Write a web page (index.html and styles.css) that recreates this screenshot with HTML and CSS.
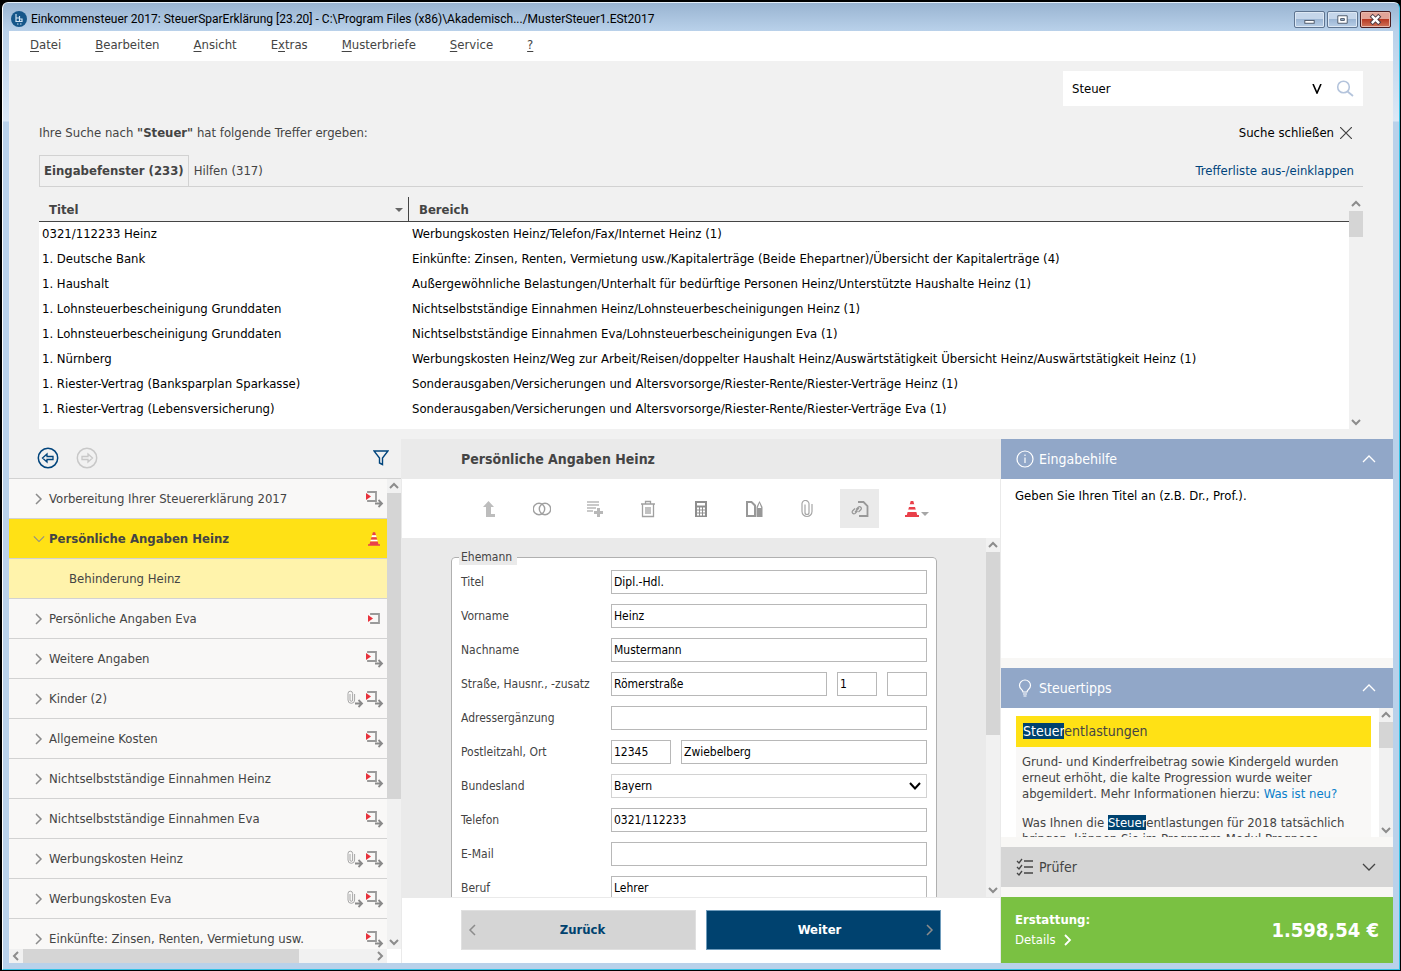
FILE: index.html
```
<!DOCTYPE html>
<html lang="de">
<head>
    <meta charset="UTF-8">
    <meta name="viewport" content="width=device-width, initial-scale=1.0">
    <title>Einkommensteuer 2017: SteuerSparErklärung</title>
    <link rel="stylesheet" href="styles.css">
</head>
<body>
    <svg class="sprite" aria-hidden="true">
        <symbol id="chev-right" viewBox="0 0 8 12"><path d="M1 1l5 5-5 5" fill="none" stroke="currentColor" stroke-width="1.5"/></symbol>
        <symbol id="chev-left" viewBox="0 0 8 12"><path d="M7 1L2 6l5 5" fill="none" stroke="currentColor" stroke-width="1.5"/></symbol>
        <symbol id="chev-down" viewBox="0 0 14 8"><path d="M1 1l6 6 6-6" fill="none" stroke="currentColor" stroke-width="1.3"/></symbol>
        <symbol id="chev-up" viewBox="0 0 14 8"><path d="M1 7l6-6 6 6" fill="none" stroke="currentColor" stroke-width="1.3"/></symbol>
        <symbol id="sb-up" viewBox="0 0 14 14"><path d="M3 9l4-4 4 4" fill="none" stroke="#8c8c8c" stroke-width="2"/></symbol>
        <symbol id="sb-down" viewBox="0 0 14 14"><path d="M3 5l4 4 4-4" fill="none" stroke="#8c8c8c" stroke-width="2"/></symbol>
        <symbol id="sb-left" viewBox="0 0 14 14"><path d="M9 3L5 7l4 4" fill="none" stroke="#8c8c8c" stroke-width="2"/></symbol>
        <symbol id="sb-right" viewBox="0 0 14 14"><path d="M5 3l4 4-4 4" fill="none" stroke="#8c8c8c" stroke-width="2"/></symbol>
        <symbol id="entry" viewBox="0 0 18 18">
            <path d="M5 5V4h8v9H5v-1" fill="none" stroke="#9a9a9a" stroke-width="1.8"/>
            <path d="M2 5l5 3.500-5 3.500z" fill="#e8323c"/>
        </symbol>
        <symbol id="entry-sub" viewBox="0 0 18 18">
            <path d="M2 3V2h8v9H2v-1" fill="none" stroke="#9a9a9a" stroke-width="1.8"/>
            <path d="M0 3l5 3.500L0 10z" fill="#e8323c"/>
            <path d="M9 13.500h7M12.500 10l3.500 3.500-3.500 3.500" fill="none" stroke="#8a8a8a" stroke-width="1.8"/>
        </symbol>
        <symbol id="clip-sub" viewBox="0 0 18 18">
            <path d="M4 4v6a1.300 1.300 0 0 0 2.600 0V3.500a2.300 2.300 0 0 0-4.600 0v6.500a3.300 3.300 0 0 0 6.600 0V4" fill="none" stroke="#a6a6a6" stroke-width="1"/>
            <path d="M9 13.500h7M12.500 10l3.500 3.500-3.500 3.500" fill="none" stroke="#8a8a8a" stroke-width="1.8"/>
        </symbol>
        <symbol id="cone" viewBox="0 0 14 16">
            <path d="M5.7 0h2.6l1 3.500H4.700z" fill="#e9404a"/>
            <path d="M4.700 3.500h4.600l.7 2.500H4z" fill="#fff"/>
            <path d="M4 6h6l.8 2.800H3.200z" fill="#e9404a"/>
            <path d="M3.200 8.800h7.600l.6 2.200H2.600z" fill="#fff"/>
            <path d="M2.600 11h8.800l.8 3H14v2H0v-2h1.800z" fill="#e9404a"/>
        </symbol>
    </svg>

    <div class="window">
        <header class="titlebar">
            <svg class="app-icon" viewBox="0 0 16 16">
                <circle cx="8" cy="8" r="8" fill="#15568a"/>
                <path d="M5 3v8M5 7h3.500M8.500 5v5M8.500 8H11v2.500H5M6 13h1.500M9 13h1.500" fill="none" stroke="#cfe2f2" stroke-width="1.200"/>
            </svg>
            <span class="caption">Einkommensteuer 2017: SteuerSparErklärung [23.20] - C:\Program Files (x86)\Akademisch.../MusterSteuer1.ESt2017</span>
            <div class="win-buttons">
                <button type="button" class="win-btn" aria-label="Minimieren"><svg viewBox="0 0 30 16"><rect x="10" y="9" width="10" height="3" fill="#fff" stroke="#4a5566"/></svg></button>
                <button type="button" class="win-btn" aria-label="Maximieren"><svg viewBox="0 0 30 16"><path d="M10 4h10v8H10zM13 7v2h4V7z" fill="#fff" fill-rule="evenodd" stroke="#4a5566"/></svg></button>
                <button type="button" class="win-btn close" aria-label="Schließen"><svg viewBox="0 0 30 16"><path d="M12 5l6 6M18 5l-6 6" stroke="#4a3a44" stroke-width="4.500" stroke-linecap="square"/><path d="M12 5l6 6M18 5l-6 6" stroke="#fff" stroke-width="2.500" stroke-linecap="square"/></svg></button>
            </div>
        </header>

        <nav class="menubar">
            <a href="#"><u>D</u>atei</a>
            <a href="#"><u>B</u>earbeiten</a>
            <a href="#"><u>A</u>nsicht</a>
            <a href="#">E<u>x</u>tras</a>
            <a href="#"><u>M</u>usterbriefe</a>
            <a href="#"><u>S</u>ervice</a>
            <a href="#"><u>?</u></a>
        </nav>

        <section class="results">
            <form class="search">
                <input type="text" value="Steuer" aria-label="Suche">
                <button type="button" aria-label="Verlauf"><svg class="history" viewBox="0 0 12 10"><path d="M2 0l4 9 4-9" fill="none" stroke="#000" stroke-width="1.600"/></svg></button>
                <button type="button" aria-label="Suchen"><svg class="lens" viewBox="0 0 18 18"><circle cx="7.500" cy="7" r="5.800" fill="none" stroke="#b4c4dc" stroke-width="1.600"/><path d="M11.500 11.500L17 16" stroke="#b4c4dc" stroke-width="1.800"/></svg></button>
            </form>
            <div class="line summary">
                <span>Ihre Suche nach <b>"Steuer"</b> hat folgende Treffer ergeben:</span>
                <button type="button" class="close-search">Suche schließen
                    <svg viewBox="0 0 12 12"><path d="M0 0l12 12M12 0L0 12" stroke="#444" stroke-width="1.200"/></svg>
                </button>
            </div>
            <div class="line tabs">
                <button type="button" class="tab active">Eingabefenster (233)</button>
                <button type="button" class="tab">Hilfen (317)</button>
                <a href="#" class="toggle">Trefferliste aus-/einklappen</a>
            </div>
            <div class="hits">
                <div class="hits-view">
                    <table>
                        <colgroup><col class="col-title"><col></colgroup>
                        <thead>
                            <tr><th><div class="head">Titel<svg viewBox="0 0 8 4"><path d="M0 0h8L4 4z" fill="#666"/></svg></div></th><th><div class="head">Bereich</div></th></tr>
                        </thead>
                        <tbody>
                            <tr><td>0321/112233 Heinz</td><td>Werbungskosten Heinz/Telefon/Fax/Internet Heinz (1)</td></tr>
                            <tr><td>1. Deutsche Bank</td><td>Einkünfte: Zinsen, Renten, Vermietung usw./Kapitalerträge (Beide Ehepartner)/Übersicht der Kapitalerträge (4)</td></tr>
                            <tr><td>1. Haushalt</td><td>Außergewöhnliche Belastungen/Unterhalt für bedürftige Personen Heinz/Unterstützte Haushalte Heinz (1)</td></tr>
                            <tr><td>1. Lohnsteuerbescheinigung Grunddaten</td><td>Nichtselbstständige Einnahmen Heinz/Lohnsteuerbescheinigungen Heinz (1)</td></tr>
                            <tr><td>1. Lohnsteuerbescheinigung Grunddaten</td><td>Nichtselbstständige Einnahmen Eva/Lohnsteuerbescheinigungen Eva (1)</td></tr>
                            <tr><td>1. Nürnberg</td><td>Werbungskosten Heinz/Weg zur Arbeit/Reisen/doppelter Haushalt Heinz/Auswärtstätigkeit Übersicht Heinz/Auswärtstätigkeit Heinz (1)</td></tr>
                            <tr><td>1. Riester-Vertrag (Banksparplan Sparkasse)</td><td>Sonderausgaben/Versicherungen und Altersvorsorge/Riester-Rente/Riester-Verträge Heinz (1)</td></tr>
                            <tr><td>1. Riester-Vertrag (Lebensversicherung)</td><td>Sonderausgaben/Versicherungen und Altersvorsorge/Riester-Rente/Riester-Verträge Eva (1)</td></tr>
                        </tbody>
                    </table>
                </div>
                <div class="vbar">
                    <svg class="arrow"><use href="#sb-up"/></svg>
                    <div class="thumb short"></div>
                    <svg class="arrow last"><use href="#sb-down"/></svg>
                </div>
            </div>
        </section>

        <main class="workspace">
            <aside class="sidebar">
                <div class="sidebar-head">
                    <button type="button" class="back" aria-label="Zurück"><svg viewBox="0 0 22 22"><circle cx="11" cy="11" r="9.700" fill="none" stroke="currentColor" stroke-width="1.500"/><path d="M5.500 11l4.500-4v2.500h6v3h-6V15z" fill="none" stroke="currentColor" stroke-width="1.300"/></svg></button>
                    <button type="button" class="forward" aria-label="Vor"><svg viewBox="0 0 22 22"><circle cx="11" cy="11" r="9.700" fill="none" stroke="currentColor" stroke-width="1.500"/><path d="M16.500 11L12 7v2.500H6v3h6V15z" fill="none" stroke="currentColor" stroke-width="1.300"/></svg></button>
                    <button type="button" class="filter" aria-label="Filter"><svg viewBox="0 0 16 16"><path d="M1 1h14L9.500 8v6.500L6.500 13V8z" fill="none" stroke="currentColor" stroke-width="1.400"/></svg></button>
                </div>
                <div class="sidebar-body">
                    <ul class="tree">
                        <li><svg class="twist"><use href="#chev-right"/></svg><a href="#">Vorbereitung Ihrer Steuererklärung 2017</a><svg class="mark"><use href="#entry-sub"/></svg></li>
                        <li class="current"><svg class="twist open"><use href="#chev-down"/></svg><a href="#">Persönliche Angaben Heinz</a><svg class="cone"><use href="#cone"/></svg></li>
                        <li class="child"><a href="#">Behinderung Heinz</a></li>
                        <li><svg class="twist"><use href="#chev-right"/></svg><a href="#">Persönliche Angaben Eva</a><svg class="mark"><use href="#entry"/></svg></li>
                        <li><svg class="twist"><use href="#chev-right"/></svg><a href="#">Weitere Angaben</a><svg class="mark"><use href="#entry-sub"/></svg></li>
                        <li><svg class="twist"><use href="#chev-right"/></svg><a href="#">Kinder (2)</a><svg class="mark"><use href="#clip-sub"/></svg><svg class="mark"><use href="#entry-sub"/></svg></li>
                        <li><svg class="twist"><use href="#chev-right"/></svg><a href="#">Allgemeine Kosten</a><svg class="mark"><use href="#entry-sub"/></svg></li>
                        <li><svg class="twist"><use href="#chev-right"/></svg><a href="#">Nichtselbstständige Einnahmen Heinz</a><svg class="mark"><use href="#entry-sub"/></svg></li>
                        <li><svg class="twist"><use href="#chev-right"/></svg><a href="#">Nichtselbstständige Einnahmen Eva</a><svg class="mark"><use href="#entry-sub"/></svg></li>
                        <li><svg class="twist"><use href="#chev-right"/></svg><a href="#">Werbungskosten Heinz</a><svg class="mark"><use href="#clip-sub"/></svg><svg class="mark"><use href="#entry-sub"/></svg></li>
                        <li><svg class="twist"><use href="#chev-right"/></svg><a href="#">Werbungskosten Eva</a><svg class="mark"><use href="#clip-sub"/></svg><svg class="mark"><use href="#entry-sub"/></svg></li>
                        <li><svg class="twist"><use href="#chev-right"/></svg><a href="#">Einkünfte: Zinsen, Renten, Vermietung usw.</a><svg class="mark"><use href="#entry-sub"/></svg></li>
                    </ul>
                    <div class="vbar">
                        <svg class="arrow"><use href="#sb-up"/></svg>
                        <div class="thumb tree-thumb"></div>
                        <svg class="arrow last"><use href="#sb-down"/></svg>
                    </div>
                </div>
                <div class="sidebar-foot">
                    <div class="hbar">
                        <svg class="arrow"><use href="#sb-left"/></svg>
                        <div class="hthumb"></div>
                        <svg class="arrow last"><use href="#sb-right"/></svg>
                    </div>
                    <div class="corner"></div>
                </div>
            </aside>

            <section class="editor">
                <h1>Persönliche Angaben Heinz</h1>
                <div class="toolbar">
                    <button type="button" aria-label="Übergeordnet"><svg viewBox="0 0 18 18"><path d="M8.500 1L14 7h-3v7h4v3H6V7H3z" fill="#bdbdbd"/></svg></button>
                    <button type="button" aria-label="Vergleichen"><svg viewBox="0 0 18 18"><g fill="none" stroke="#a0a0a0" stroke-width="1.400"><circle cx="6" cy="9" r="5.700"/><circle cx="12" cy="9" r="5.700"/></g></svg></button>
                    <button type="button" aria-label="Hinzufügen"><svg viewBox="0 0 18 18"><path d="M1 2h12M1 5h12M1 8h9M1 11h6" stroke="#b8b8b8" stroke-width="1.300"/><path d="M12.500 8v9M8 12.500h9" stroke="#b8b8b8" stroke-width="3"/></svg></button>
                    <button type="button" aria-label="Löschen"><svg viewBox="0 0 18 18"><path d="M2 4h14M6.500 4V1.500h5V4M3.500 4v12.500h11V4M7 7v7M9 7v7M11 7v7" fill="none" stroke="#a0a0a0" stroke-width="1.300"/></svg></button>
                    <button type="button" aria-label="Rechner"><svg viewBox="0 0 18 18"><path d="M3 1h12v16H3z" fill="#8e8e8e"/><path d="M5 3h8v2.500H5zM5 7.500h2v2H5zM8 7.500h2v2H8zM11 7.500h2v2h-2zM5 10.500h2v2H5zM8 10.500h2v2H8zM11 10.500h2v2h-2zM5 13.500h2v2H5zM8 13.500h2v2H8zM11 13.500h2v2h-2z" fill="#fff"/></svg></button>
                    <button type="button" aria-label="Notiz"><svg viewBox="0 0 18 18"><path d="M2 2h4.500L10 5.500V16H2z" fill="none" stroke="#989898" stroke-width="2"/><path d="M11.500 10V7l3-6 3 6v10h-6z" fill="#989898"/><path d="M14.500 3l1.800 5h-3.600z" fill="#fff"/></svg></button>
                    <button type="button" aria-label="Anhang"><svg viewBox="0 0 18 18"><path d="M7 4.500v8a2 2 0 0 0 4 0v-9a2.500 2.500 0 0 0-7 1v7a5 5 0 0 0 10 0V4" fill="none" stroke="#a6a6a6" stroke-width="1.200"/></svg></button>
                    <button type="button" class="pressed" aria-label="Verknüpfen"><svg viewBox="0 0 18 18"><path d="M7 2h5.500L16.500 6v10H8" fill="none" stroke="#989898" stroke-width="1.800"/><path d="M5 9.500l2.500-2.500a1.800 1.800 0 0 1 2.500 2.500L7.500 12M6.500 11L4 13.500A1.800 1.800 0 0 1 1.500 11L4 8.500M4 12l4-4" fill="none" stroke="#989898" stroke-width="1.200"/></svg></button>
                    <button type="button" class="warn" aria-label="Baustelle"><svg class="cone-big" viewBox="0 0 14 16"><use href="#cone"/></svg><svg class="drop" viewBox="0 0 8 4"><path d="M0 0h8L4 4z" fill="#a6a6a6"/></svg></button>
                </div>
                <div class="form-area">
                    <form class="form-view">
                        <fieldset>
                            <legend>Ehemann</legend>
                            <div class="row"><label for="titel">Titel</label><input type="text" id="titel" value="Dipl.-Hdl."></div>
                            <div class="row"><label for="vorname">Vorname</label><input type="text" id="vorname" value="Heinz"></div>
                            <div class="row"><label for="nachname">Nachname</label><input type="text" id="nachname" value="Mustermann"></div>
                            <div class="row"><label for="strasse">Straße, Hausnr., -zusatz</label><input type="text" id="strasse" value="Römerstraße"><input type="text" class="tiny" value="1" aria-label="Hausnummer"><input type="text" class="tiny" aria-label="Zusatz"></div>
                            <div class="row"><label for="adresse">Adressergänzung</label><input type="text" id="adresse"></div>
                            <div class="row"><label for="plz">Postleitzahl, Ort</label><input type="text" id="plz" class="zip" value="12345"><input type="text" value="Zwiebelberg" aria-label="Ort"></div>
                            <div class="row"><label for="land">Bundesland</label><div class="select"><select id="land"><option>Bayern</option></select><svg viewBox="0 0 14 8"><path d="M2 1l5 5.500L12 1" fill="none" stroke="#000" stroke-width="2"/></svg></div></div>
                            <div class="row"><label for="telefon">Telefon</label><input type="text" id="telefon" value="0321/112233"></div>
                            <div class="row"><label for="email">E-Mail</label><input type="text" id="email"></div>
                            <div class="row"><label for="beruf">Beruf</label><input type="text" id="beruf" value="Lehrer"></div>
                        </fieldset>
                    </form>
                    <div class="vbar">
                        <svg class="arrow"><use href="#sb-up"/></svg>
                        <div class="thumb form-thumb"></div>
                        <svg class="arrow last"><use href="#sb-down"/></svg>
                    </div>
                </div>
                <footer class="actions">
                    <button type="button" class="prev"><svg><use href="#chev-left"/></svg><span>Zurück</span></button>
                    <button type="button" class="next"><span>Weiter</span><svg><use href="#chev-right"/></svg></button>
                </footer>
            </section>

            <aside class="help">
                <h2><svg viewBox="0 0 18 18"><circle cx="9" cy="9" r="8" fill="none" stroke="currentColor" stroke-width="1.200"/><path d="M9 7.500V13M9 4.500V6" stroke="currentColor" stroke-width="1.200"/></svg>Eingabehilfe<svg class="fold"><use href="#chev-up"/></svg></h2>
                <p class="hint">Geben Sie Ihren Titel an (z.B. Dr., Prof.).</p>
                <h2><svg viewBox="0 0 18 18"><path d="M7 13c0-2.500-3.500-3-3.500-6.500a5.500 5.500 0 0 1 11 0C14.500 10 11 10.500 11 13zM7 15h4M7.500 17h3" fill="none" stroke="currentColor" stroke-width="1.200"/></svg>Steuertipps<svg class="fold"><use href="#chev-up"/></svg></h2>
                <div class="tips">
                    <div class="tips-view">
                        <article>
                            <h3><mark>Steuer</mark>entlastungen</h3>
                            <p>Grund- und Kinderfreibetrag sowie Kindergeld wurden<br>erneut erhöht, die kalte Progression wurde weiter<br>abgemildert. Mehr Informationen hierzu: <a href="#">Was ist neu?</a></p>
                            <p>Was Ihnen die <mark>Steuer</mark>entlastungen für 2018 tatsächlich<br>bringen, können Sie im Programm-Modul Prognose</p>
                        </article>
                    </div>
                    <div class="vbar">
                        <svg class="arrow"><use href="#sb-up"/></svg>
                        <div class="thumb short"></div>
                        <svg class="arrow last"><use href="#sb-down"/></svg>
                    </div>
                </div>
                <h2 class="closed"><svg viewBox="0 0 18 18"><path d="M8 3h9M8 9h9M8 15h9M1 3l2 2 3-4M1 9l2 2 3-4M1 15l2 2 3-4" fill="none" stroke="currentColor" stroke-width="1.300"/></svg>Prüfer<svg class="fold"><use href="#chev-down"/></svg></h2>
                <div class="refund">
                    <div class="refund-label">
                        <strong>Erstattung:</strong>
                        <a href="#">Details <svg viewBox="0 0 8 12"><path d="M1 1l5 5-5 5" fill="none" stroke="currentColor" stroke-width="1.800"/></svg></a>
                    </div>
                    <output>1.598,54 €</output>
                </div>
            </aside>
        </main>
    </div>
</body>
</html>
```
FILE: styles.css
```
* {
    box-sizing: border-box;
}

body {
    margin: 0;
    height: 100vh;
    padding: 2px 1px 1px 2px;
    background-color: #000;
    color: #444;
    font-family: "DejaVu Sans Condensed", "Noto Sans", sans-serif;
    font-size: 13px;
    line-height: 16px;
}

button,
input,
select {
    font: inherit;
    color: inherit;
}

button {
    display: flex;
    align-items: center;
    padding: 0;
    border: 0;
    background: none;
    cursor: pointer;
}

a {
    color: inherit;
    text-decoration: none;
}

svg {
    display: block;
    flex: none;
}

.sprite {
    position: absolute;
    width: 0;
    height: 0;
}

.window {
    height: 100%;
    display: flex;
    flex-direction: column;
    padding: 0 6px 6px;
    border: 1px solid #35c3e6;
    border-top-color: #e4eef8;
    border-left-color: #fff;
    border-radius: 6px 6px 0 0;
    background: linear-gradient(#99b4d1 0, #b9d1ea 28px, #dbe8f6 118px, #b9d1ea 119px);
    overflow: hidden;
}

/* title bar and menu */

.titlebar {
    flex: none;
    height: 28px;
    display: flex;
    align-items: center;
    padding: 4px 2px 0 2px;
    color: #000;
    font-family: Roboto, sans-serif;
    font-size: 12px;
}

.app-icon {
    width: 16px;
    height: 16px;
    margin-right: 4px;
}

.caption {
    flex: 1;
    white-space: nowrap;
}

.win-buttons {
    display: flex;
    gap: 2px;
}

.win-btn {
    width: 31px;
    height: 17px;
    border: 1px solid #5e7490;
    border-radius: 2px;
    background: linear-gradient(#c5d6ea 45%, #9cb6d4 50%, #b8cee6);
    box-shadow: inset 0 0 0 1px #dde8f4;
}

.win-btn svg {
    width: 29px;
    height: 15px;
}

.win-btn.close {
    border-color: #4a1c20;
    background: linear-gradient(#e2a498 45%, #b83a24 50%, #d0745a);
    box-shadow: inset 0 0 0 1px #e8b8ac;
}

.menubar {
    flex: none;
    height: 30px;
    display: flex;
    gap: 34px;
    padding: 6px 21px;
    background-color: #fff;
}

.menubar u {
    text-underline-offset: 2px;
}

/* search results */

.results {
    flex: none;
    padding: 10px 30px;
    background-color: #f1f1f1;
}

.search {
    width: 300px;
    height: 35px;
    margin-left: auto;
    padding: 0 9px;
    display: flex;
    align-items: center;
    gap: 13px;
    background-color: #fff;
    color: #000;
}

.search input {
    flex: 1;
    min-width: 0;
    padding: 0;
    border: 0;
    outline: 0;
}

.history {
    width: 12px;
    height: 10px;
}

.lens {
    width: 18px;
    height: 18px;
}

.line {
    display: flex;
    align-items: center;
    justify-content: space-between;
}

.summary {
    height: 49px;
    padding-top: 4px;
}

.close-search {
    gap: 6px;
    margin-right: 11px;
    color: #000;
}

.close-search svg {
    width: 12px;
    height: 12px;
}

.tabs {
    height: 32px;
    border-bottom: 1px solid #d2d2d2;
}

.tab {
    align-self: stretch;
    padding: 0 5px;
}

.tab.active {
    padding: 0 4px;
    border: 1px solid #d2d2d2;
    border-bottom: 0;
    font-weight: bold;
}

.toggle {
    margin-left: auto;
    margin-right: 9px;
    color: #00447c;
}

.hits {
    display: flex;
    height: 232px;
    margin-top: 10px;
}

.hits-view {
    flex: 1;
    overflow: hidden;
    background-color: #fff;
}

.hits table {
    width: 100%;
    table-layout: fixed;
    border-collapse: collapse;
    color: #000;
}

.col-title {
    width: 370px;
}

.hits th {
    height: 24px;
    padding: 0;
    border-bottom: 1px solid #444;
    background-color: #f1f1f1;
    color: #444;
    text-align: left;
}

.head {
    display: flex;
    align-items: center;
    justify-content: space-between;
    height: 24px;
    padding: 2px 5px 0 10px;
}

th:first-child .head {
    border-right: 1px solid #444;
}

.head svg {
    width: 8px;
    height: 4px;
}

.hits td {
    height: 25px;
    padding: 0 3px;
    white-space: nowrap;
}

/* scroll bars */

.vbar {
    flex: none;
    width: 14px;
    display: flex;
    flex-direction: column;
    background-color: #f1f1f1;
}

.hbar {
    flex: 1;
    display: flex;
    background-color: #f1f1f1;
}

.arrow {
    width: 14px;
    height: 14px;
}

.vbar .last {
    margin-top: auto;
}

.hbar .last {
    margin-left: auto;
}

.thumb,
.hthumb {
    background-color: #d5d5d5;
}

.short {
    height: 26px;
}

.tree-thumb {
    height: 65%;
}

.form-thumb {
    height: 51%;
}

.hthumb {
    width: 73%;
}

/* lower part */

.workspace {
    flex: 1;
    min-height: 0;
    display: grid;
    grid-template-columns: 392px 1fr 392px;
    grid-template-rows: 100%;
    background-color: #f1f1f1;
}

.sidebar,
.editor,
.help {
    min-width: 0;
    display: flex;
    flex-direction: column;
}

.sidebar-head {
    flex: none;
    height: 40px;
    display: flex;
    align-items: center;
    gap: 17px;
    padding: 0 12px 2px 28px;
    border-bottom: 1px solid #d2d2d2;
}

.sidebar-head svg {
    width: 22px;
    height: 22px;
}

.back {
    color: #00447c;
}

.forward {
    color: #c8c8c8;
}

.filter {
    margin-left: auto;
    color: #00447c;
}

.sidebar-head .filter svg {
    width: 16px;
    height: 16px;
}

.sidebar-body {
    flex: 1;
    min-height: 0;
    display: flex;
}

.tree {
    flex: 1;
    margin: 0;
    padding: 0;
    list-style: none;
    overflow: hidden;
    background-color: #f9f8f7;
}

.tree li {
    height: 40px;
    display: flex;
    align-items: center;
    gap: 2px;
    padding: 0 3px 0 26px;
    border-bottom: 1px solid #d2d2d2;
}

.tree a {
    flex: 1;
    margin-left: 4px;
    white-space: nowrap;
}

.twist {
    width: 8px;
    height: 12px;
    color: #8c8c8c;
}

.twist.open {
    width: 12px;
    height: 8px;
}

.tree .current {
    padding: 0 7px 0 24px;
    background-color: #ffe115;
    font-weight: bold;
}

.current a {
    margin-left: 2px;
}

.tree .child {
    padding-left: 56px;
    background-color: #fff3ab;
}

.mark {
    width: 18px;
    height: 18px;
}

.cone {
    width: 12px;
    height: 14px;
}

.sidebar-foot {
    flex: none;
    display: flex;
    height: 14px;
}

.corner {
    width: 14px;
    background-color: #fff;
}

.editor {
    border-left: 1px solid #eaeaea;
    border-right: 1px solid #eaeaea;
    background-color: #fff;
}

.editor h1 {
    flex: none;
    height: 40px;
    margin: 0;
    padding: 0 59px;
    background-color: #eaeaea;
    font-size: 14px;
    line-height: 41px;
}

.toolbar {
    flex: none;
    height: 59px;
    display: flex;
    align-items: center;
    gap: 14px;
    padding-left: 67px;
}

.toolbar button {
    width: 39px;
    height: 39px;
    justify-content: center;
}

.toolbar svg {
    width: 18px;
    height: 18px;
}

.toolbar .pressed {
    background-color: #eaeaea;
}

.toolbar .warn {
    gap: 2px;
    padding-left: 8px;
}

.toolbar .cone-big {
    width: 14px;
    height: 16px;
}

.toolbar .drop {
    width: 8px;
    height: 4px;
    margin-top: 10px;
}

.form-area {
    flex: 1;
    min-height: 0;
    display: flex;
    border-bottom: 1px solid #eaeaea;
}

.form-view {
    flex: 1;
    overflow: hidden;
    padding: 11px 49px 0;
    background-color: #eaeaea;
    font-size: 12px;
}

fieldset {
    margin: 0;
    padding: 5px 9px 9px;
    border: 1px solid #b0b0b0;
    border-radius: 4px;
    background-color: #fff;
}

legend {
    margin-left: -2px;
    padding: 0 5px 0 2px;
    background-color: #eaeaea;
}

.row {
    display: flex;
    align-items: center;
    gap: 10px;
    margin-bottom: 10px;
}

.row label {
    flex: none;
    width: 140px;
}

.row input,
.row select {
    flex: 1;
    width: 100%;
    min-width: 0;
    height: 24px;
    margin: 0;
    padding: 0 2px;
    border: 1px solid #b8b8b8;
    border-radius: 0;
    background-color: #fff;
    color: #000;
}

.row .tiny {
    flex: 0 0 40px;
}

.row .zip {
    flex: 0 0 60px;
}

.select {
    flex: 1;
    display: grid;
    align-items: center;
}

.select select {
    grid-area: 1 / 1;
    appearance: none;
    border-color: #d2d2d2;
}

.select svg {
    grid-area: 1 / 1;
    justify-self: end;
    width: 14px;
    height: 8px;
    margin-right: 5px;
    pointer-events: none;
}

.actions {
    flex: none;
    display: flex;
    gap: 10px;
    height: 65px;
    padding: 12px 59px 13px;
}

.actions button {
    flex: 1;
    padding: 0 6px;
    border: 1px solid #e0e0e0;
    background-color: #d5d5d5;
    color: #00426f;
    font-weight: bold;
}

.actions span {
    flex: 1;
}

.actions svg {
    width: 8px;
    height: 12px;
    color: #8c8c8c;
}

.actions .next {
    border-color: #6f9cbc;
    background-color: #00426f;
    color: #fff;
}

/* help column */

.help {
    background-color: #f8f7f5;
}

.help h2 {
    flex: none;
    height: 40px;
    display: flex;
    align-items: center;
    gap: 5px;
    margin: 0;
    padding: 0 17px 0 15px;
    background-color: #91a7c8;
    color: #fff;
    font-size: 14px;
    font-weight: normal;
}

.help h2 svg {
    width: 18px;
    height: 18px;
}

.help h2 .fold {
    width: 14px;
    height: 8px;
    margin-left: auto;
}

.help .closed {
    margin: 10px 0;
    background-color: #d5d5d5;
    color: #444;
}

.hint {
    flex: 1;
    margin: 0 0 10px;
    padding: 9px 14px;
    background-color: #fff;
    color: #000;
}

.tips {
    flex: none;
    height: 129px;
    display: flex;
    background-color: #fff;
}

.tips-view {
    flex: 1;
    overflow: hidden;
    padding: 8px 8px 0 15px;
}

.tips article {
    background-color: #f9f8f7;
}

.tips h3 {
    margin: 0;
    padding: 0 7px;
    background-color: #ffe115;
    font-size: 14px;
    font-weight: normal;
    line-height: 31px;
}

.tips p {
    margin: 0;
    padding: 7px 6px 6px;
    white-space: nowrap;
}

.tips a {
    color: #0a7fca;
}

mark {
    background-color: #00426f;
    color: #fff;
}

.refund {
    flex: none;
    height: 66px;
    display: flex;
    align-items: center;
    justify-content: space-between;
    padding: 0 14px;
    background-color: #7ac142;
    color: #fff;
}

.refund-label {
    display: grid;
    gap: 4px;
}

.refund-label a {
    display: flex;
    align-items: center;
    gap: 8px;
}

.refund-label svg {
    width: 8px;
    height: 12px;
}

.refund output {
    font-size: 20px;
    font-weight: bold;
}
```
